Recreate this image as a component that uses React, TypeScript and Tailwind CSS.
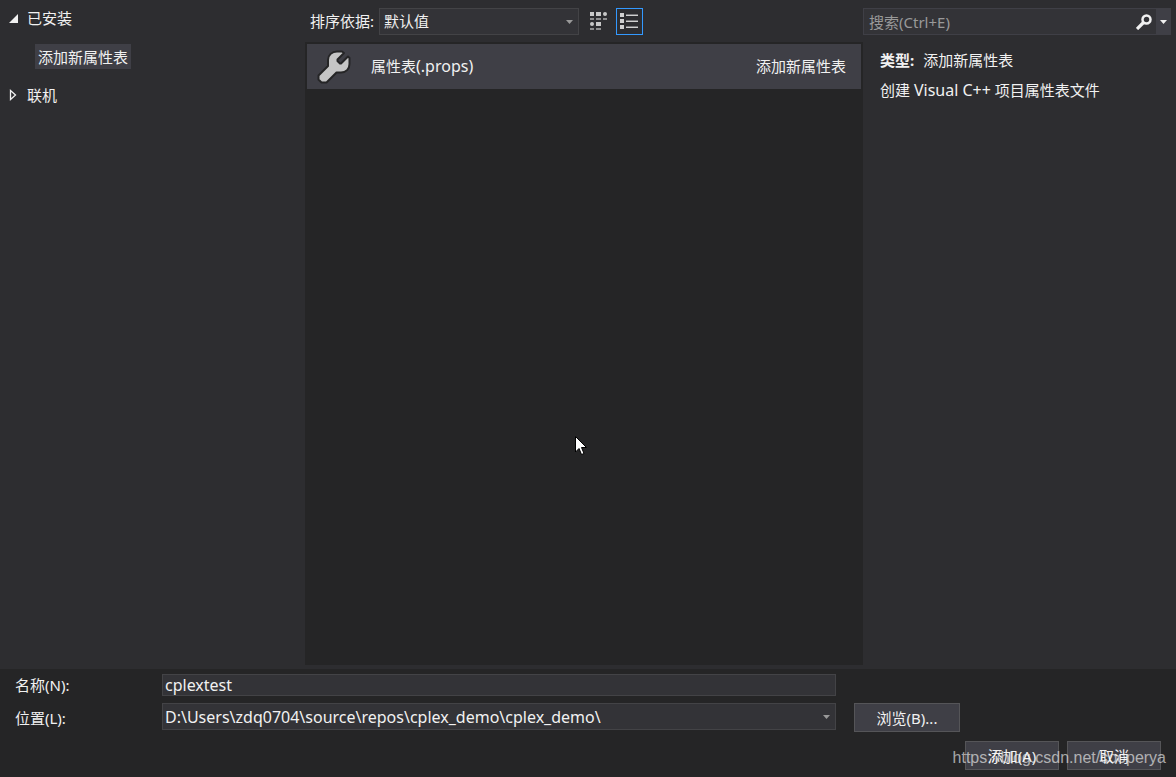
import { useState } from 'react';
import clsx from 'clsx';

const Caret = ({ className }: { className?: string }) => (
  <svg viewBox="0 0 7 4" className={clsx('h-[4px] w-[7px] fill-current', className)} aria-hidden="true">
    <path d="M0 0h7L3.5 4z" />
  </svg>
);

const WrenchIcon = () => (
  <svg viewBox="0 0 34 34" className="h-[34px] w-[34px] shrink-0" aria-hidden="true">
    <path
      d="M11 10C11 5 15 1.500 20 1.500H25L27 3L20.500 9.500V11L23 13.500H24L31 6.500L32.500 8V14C32.500 19 29 22.500 24 22.500H19.500L9.500 32.500H4.500L1.500 29.500V25.500L11 16Z"
      fill="#c5c5c5"
      stroke="#252526"
      strokeWidth="2"
      strokeLinejoin="round"
    />
  </svg>
);

const SearchIcon = () => (
  <svg viewBox="0 0 16 16" className="h-4 w-4" fill="none" stroke="#f1f1f1" aria-hidden="true">
    <circle cx="10.500" cy="5.500" r="4" strokeWidth="2.500" />
    <path d="M7.500 8.500L1 15" strokeWidth="3.200" />
  </svg>
);

const GridIcon = () => (
  <svg viewBox="0 0 17 18" className="h-[18px] w-[17px]" fill="#c8c8c8" aria-hidden="true">
    <path d="M0 0h4v4H0zM6 0h5v4H6zM6 10h5v4H6z" />
    <circle cx="15" cy="2" r="2" />
    <circle cx="2" cy="12" r="2" />
    <path d="M0 6h4v2H0zM6 6h5v2H6zM13 6h4v2h-4zM0 16h4v2H0zM6 16h5v2H6z" fill="#8e8e8f" />
  </svg>
);

const ListIcon = () => (
  <svg viewBox="0 0 19 17" className="h-[17px] w-[19px]" fill="#d0d0d0" aria-hidden="true">
    <path d="M0 0h4v4H0zM0 6h4v4H0zM0 12h4v4H0zM6 2h12v1H6zM6 8h12v1H6zM6 14h12v1H6z" />
    <path d="M6 1h12v1H6zM6 7h12v1H6zM6 13h12v1H6z" fill="#77777a" />
  </svg>
);

const TemplateTree = () => (
  <nav className="w-[305px] shrink-0 pl-[9px] pt-[7px]">
    <ul>
      <li>
        <button type="button" aria-expanded="true" className="flex h-[22px] items-center gap-[9px]">
          <svg viewBox="0 0 9 9" className="h-[9px] w-[9px] fill-[#f1f1f1]" aria-hidden="true">
            <path d="M9 0V9H0z" />
          </svg>
          已安装
        </button>
        <ul className="py-[15px] pl-[26px]">
          <li>
            <button type="button" className="block h-[25px] bg-[#3f3f46] px-[3px]">
              添加新属性表
            </button>
          </li>
        </ul>
      </li>
      <li>
        <button type="button" aria-expanded="false" className="flex h-[22px] items-center gap-[9px]">
          <svg viewBox="0 0 9 12" className="h-[12px] w-[9px]" fill="none" stroke="#f1f1f1" aria-hidden="true">
            <path d="M1.500 1.500L6.500 6L1.500 10.500z" strokeWidth="1.300" />
          </svg>
          联机
        </button>
      </li>
    </ul>
  </nav>
);

const App = () => {
  const [view, setView] = useState<'grid' | 'list'>('list');
  const [search, setSearch] = useState('');
  const [name, setName] = useState('cplextest');

  const viewButton = 'flex h-[27px] w-[27px] items-center justify-center border';
  const field = 'w-full border border-[#434346] bg-[#333337] text-[#f1f1f1] outline-none';
  const button = 'border border-[#555558] bg-[#3f3f46] hover:bg-[#4a4a52]';

  return (
    <div className="relative flex h-screen flex-col overflow-hidden bg-[#2d2d30] font-['Noto_Sans','Noto_Sans_CJK_SC',sans-serif] text-[15px] leading-[22px] text-[#f1f1f1]">
      <main className="flex min-h-0 flex-1">
        <TemplateTree />

        <section className="flex min-w-0 flex-1 flex-col pb-1">
          <div className="flex h-[42px] items-center pl-[5px]">
            <label htmlFor="sort" className="w-[69px] shrink-0 whitespace-nowrap">
              排序依据:
            </label>
            <div className="relative w-[200px]">
              <select id="sort" className={clsx(field, 'h-[27px] appearance-none pl-1 pr-6')}>
                <option>默认值</option>
              </select>
              <Caret className="pointer-events-none absolute right-[6px] top-[12px] text-[#999999]" />
            </div>
            <div className="flex gap-1 pl-[6px]">
              <button
                type="button"
                aria-label="网格"
                aria-pressed={view === 'grid'}
                onClick={() => setView('grid')}
                className={clsx(viewButton, view === 'grid' ? 'border-[#3399ff]' : 'border-transparent')}
              >
                <GridIcon />
              </button>
              <button
                type="button"
                aria-label="列表"
                aria-pressed={view === 'list'}
                onClick={() => setView('list')}
                className={clsx(viewButton, view === 'list' ? 'border-[#3399ff]' : 'border-transparent')}
              >
                <ListIcon />
              </button>
            </div>
          </div>

          <div className="flex-1 bg-[#252526] p-[2px]">
            <button type="button" className="flex h-[45px] w-full items-center bg-[#3f3f46] pl-[10px] pr-[15px] text-left">
              <WrenchIcon />
              <span className="flex-1 pb-[2px] pl-5">
                属性表<span className="text-[16px]">(.props)</span>
              </span>
              <span className="pb-[2px]">添加新属性表</span>
            </button>
          </div>
        </section>

        <aside className="w-[313px] shrink-0 pr-[5px] pt-2">
          <div className="flex h-[27px] border border-[#3f3f46] bg-[#333337]">
            <input
              type="text"
              aria-label="搜索"
              placeholder="搜索(Ctrl+E)"
              value={search}
              onChange={(e) => setSearch(e.target.value)}
              className="min-w-0 flex-1 bg-transparent pl-[5px] outline-none placeholder:text-[#999999]"
            />
            <button type="button" aria-label="搜索" className="flex w-6 items-center justify-center">
              <SearchIcon />
            </button>
            <button type="button" aria-label="搜索选项" className="flex w-[14px] items-center justify-center bg-[#3f3f46]">
              <Caret />
            </button>
          </div>
          <div className="flex flex-col gap-2 pl-[17px] pt-[14px]">
            <p>
              <strong className="mr-[9px] font-bold">类型:</strong>
              添加新属性表
            </p>
            <p>
              创建 <span className="text-[16px]">Visual C++</span> 项目属性表文件
            </p>
          </div>
        </aside>
      </main>

      <form className="h-[108px] shrink-0 bg-[#252526] pt-[5px]" onSubmit={(e) => e.preventDefault()}>
        <div className="grid grid-cols-[147px_minmax(0,1fr)_124px] gap-y-[7px] pl-[15px] pr-[216px]">
          <label htmlFor="name" className="self-center">
            名称(N):
          </label>
          <input
            id="name"
            type="text"
            value={name}
            onChange={(e) => setName(e.target.value)}
            className={clsx(field, 'h-[22px] px-[2px] text-[16px]')}
          />
          <span />

          <label htmlFor="location" className="self-center">
            位置(L):
          </label>
          <div className="relative">
            <select id="location" className={clsx(field, 'h-[27px] appearance-none pl-[2px] pr-6 text-[16px]')}>
              <option>D:\Users\zdq0704\source\repos\cplex_demo\cplex_demo\</option>
            </select>
            <Caret className="pointer-events-none absolute right-[6px] top-[12px] text-[#999999]" />
          </div>
          <button type="button" className={clsx(button, 'ml-[18px] h-[29px]')}>
            浏览(B)...
          </button>
        </div>
        <div className="flex justify-end gap-2 pr-[15px] pt-[9px]">
          <button type="submit" className={clsx(button, 'h-[29px] w-[94px]')}>
            添加(A)
          </button>
          <button type="button" className={clsx(button, 'h-[29px] w-[94px]')}>
            取消
          </button>
        </div>
      </form>

      <span className="pointer-events-none absolute bottom-[8px] right-[10px] font-['Liberation_Sans',Arial,sans-serif] text-[16px] text-[#ffffff]/60">
        https://blog.csdn.net/cooperya
      </span>

      {/* Mouse pointer */}
      <svg viewBox="0 0 12 19" className="pointer-events-none absolute left-[575px] top-[436px] h-[19px] w-[12px]" aria-hidden="true">
        <path d="M.5 .5V16L4 12.500L6.500 18.500L9 17.500L6.500 11.500H11.500z" fill="#fff" stroke="#000" strokeWidth="1" />
      </svg>
    </div>
  );
};

export default App;
